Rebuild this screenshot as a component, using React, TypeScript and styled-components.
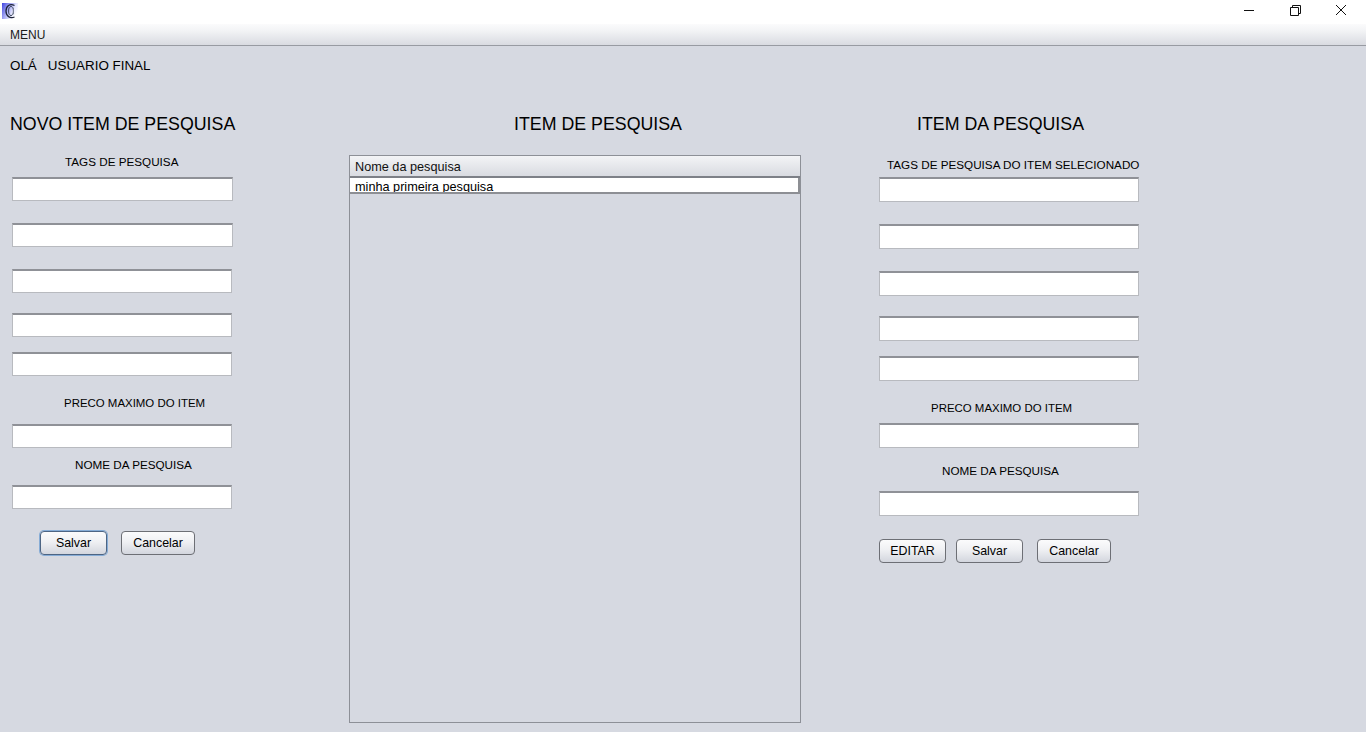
import styled, { createGlobalStyle } from "styled-components";

const GlobalStyle = createGlobalStyle`
  html, body {
    margin: 0;
    height: 100%;
    background: #d6d9e1;
    overflow: hidden;
  }
  * {
    box-sizing: border-box;
  }
`;

const Window = styled.div`
  width: 1366px;
  height: 732px;
  display: flex;
  flex-direction: column;
  font-family: "Liberation Sans", Arial, sans-serif;
  color: #000;
  background: #d6d9e1;
`;

const TitleBar = styled.div`
  height: 24px;
  flex: none;
  background: #fff;
  display: flex;
  align-items: flex-start;
  justify-content: space-between;
  padding: 3px 0 0 2px;
`;

const WindowButtons = styled.div`
  display: flex;
  gap: 23px;
  padding-right: 13px;
`;

const MenuBar = styled.div`
  height: 22px;
  flex: none;
  padding: 4px 0 0 10px;
  font-size: 12px;
  line-height: 15px;
  color: #1a1a1a;
  background: linear-gradient(#fbfbfc 0%, #f3f4f6 30%, #d9dbe1 100%);
  border-bottom: 1px solid #989ba2;
`;

const Greeting = styled.div`
  display: flex;
  gap: 11px;
  padding: 11px 0 0 10px;
  height: 68px;
  flex: none;
  font-size: 13.4px;
  line-height: 17px;
`;

const Columns = styled.div`
  display: grid;
  grid-template-columns: 339px 530px 1fr;
  padding-left: 10px;
  flex: 1;
  min-height: 0;
`;

const Column = styled.section`
  display: flex;
  flex-direction: column;
  min-height: 0;
`;

const Heading = styled.h2<{ $indent: number }>`
  margin: 0;
  padding-left: ${(p) => p.$indent}px;
  height: 21px;
  font-size: 17.8px;
  line-height: 21px;
  font-weight: 400;
  white-space: nowrap;
`;

const Label = styled.div<{ $top: number; $indent: number; $size?: number }>`
  margin-top: ${(p) => p.$top}px;
  padding-left: ${(p) => p.$indent}px;
  height: 14px;
  font-size: ${(p) => p.$size ?? 11.7}px;
  line-height: 14px;
  white-space: nowrap;
`;

const Field = styled.input<{ $top: number; $width: number; $height: number; $left?: number }>`
  display: block;
  margin-top: ${(p) => p.$top}px;
  margin-left: ${(p) => p.$left ?? 0}px;
  width: ${(p) => p.$width}px;
  height: ${(p) => p.$height}px;
  padding: 0 4px;
  background: #fff;
  border: 1px solid #b8babf;
  border-top: 2px solid #8f9197;
  outline: none;
  border-radius: 0;
`;

const ButtonRow = styled.div<{ $top: number; $indent: number }>`
  display: flex;
  margin-top: ${(p) => p.$top}px;
  padding-left: ${(p) => p.$indent}px;
`;

const PushButton = styled.button<{ $width: number; $left: number; $focused?: boolean }>`
  width: ${(p) => p.$width}px;
  height: 24px;
  margin-left: ${(p) => p.$left}px;
  padding: 1px 0 0;
  font-family: inherit;
  font-size: 12.4px;
  line-height: 15px;
  color: #000;
  border-radius: 4px;
  border: 1px solid ${(p) => (p.$focused ? "#4d6584" : "#6d6f75")};
  background: linear-gradient(#fbfbfc 0%, #eff0f3 45%, #d3d6de 100%);
  box-shadow: ${(p) => (p.$focused ? "0 0 0 1px #86acd6" : "none")};
`;

const TableBox = styled.div`
  width: 452px;
  flex: none;
  height: 568px;
  margin-top: 20px;
  border: 1px solid #8d9097;
`;

const TableHeader = styled.div`
  height: 22px;
  padding: 4px 0 0 5px;
  font-size: 12.7px;
  line-height: 14px;
  color: #111;
  background: linear-gradient(#f3f4f6, #d9dbe1);
  border-bottom: 2px solid #7d8087;
`;

const TableRow = styled.div`
  height: 16px;
  padding-left: 5px;
  font-size: 12.7px;
  line-height: 18px;
  background: #fff;
  overflow: hidden;
  border-right: 2px solid #8d8f94;
  border-bottom: 2px solid #8d8f94;
`;

const AppIcon = () => (
  <svg width="16" height="16" viewBox="0 0 16 16">
    <defs>
      <linearGradient id="iconBg" x1="0" y1="0" x2="1" y2="0.5">
        <stop offset="0" stopColor="#3f44e0" />
        <stop offset="0.75" stopColor="#e6e8ff" />
        <stop offset="1" stopColor="#ffffff" />
      </linearGradient>
    </defs>
    <rect width="16" height="16" fill="url(#iconBg)" />
    <path d="M12.5 2.5C8 0 4 3 4 8C4 13 8 16 12.5 14" fill="none" stroke="#1c2238" strokeWidth="1.3" />
    <ellipse cx="9" cy="8" rx="2.4" ry="4.5" fill="none" stroke="#3a4460" strokeWidth="1" />
    <path d="M11.5 5V11" stroke="#7a8296" strokeWidth="1" />
  </svg>
);

const MinimizeIcon = () => (
  <svg width="23" height="16" viewBox="0 0 23 16">
    <path d="M6 7.5H16" stroke="#111" strokeWidth="1" fill="none" />
  </svg>
);

const RestoreIcon = () => (
  <svg width="23" height="16" viewBox="0 0 23 16">
    <path d="M6.5 4.5H14.5V12.5H6.5ZM8.5 4.5V2.5H16.5V10.5H14.5" stroke="#111" strokeWidth="1" fill="none" />
  </svg>
);

const CloseIcon = () => (
  <svg width="23" height="16" viewBox="0 0 23 16">
    <path d="M6 2L16 12M16 2L6 12" stroke="#111" strokeWidth="1" fill="none" />
  </svg>
);

const fieldGaps = [22, 22, 20, 15];

export default function App() {
  return (
    <Window>
      <GlobalStyle />
      <TitleBar>
        <AppIcon />
        <WindowButtons>
          <MinimizeIcon />
          <RestoreIcon />
          <CloseIcon />
        </WindowButtons>
      </TitleBar>
      <MenuBar>MENU</MenuBar>
      <Greeting>
        <span>OLÁ</span>
        <span>USUARIO FINAL</span>
      </Greeting>
      <Columns>
        <Column>
          <Heading $indent={0}>NOVO ITEM DE PESQUISA</Heading>
          <Label $top={20} $indent={55}>TAGS DE PESQUISA</Label>
          <Field $top={8} $width={221} $height={24} $left={2} />
          {fieldGaps.map((top, i) => (
            <Field key={i} $top={top} $width={i === 0 ? 221 : 220} $height={24} $left={2} />
          ))}
          <Label $top={20} $indent={54} $size={11.45}>PRECO MAXIMO DO ITEM</Label>
          <Field $top={14} $width={220} $height={24} $left={2} />
          <Label $top={10} $indent={65}>NOME DA PESQUISA</Label>
          <Field $top={13} $width={220} $height={24} $left={2} />
          <ButtonRow $top={22} $indent={30}>
            <PushButton $width={67} $left={0} $focused>Salvar</PushButton>
            <PushButton $width={74} $left={14}>Cancelar</PushButton>
          </ButtonRow>
        </Column>
        <Column>
          <Heading $indent={165}>ITEM DE PESQUISA</Heading>
          <TableBox>
            <TableHeader>Nome da pesquisa</TableHeader>
            <TableRow>minha primeira pesquisa</TableRow>
          </TableBox>
        </Column>
        <Column>
          <Heading $indent={38}>ITEM DA PESQUISA</Heading>
          <Label $top={23} $indent={8}>TAGS DE PESQUISA DO ITEM SELECIONADO</Label>
          <Field $top={5} $width={260} $height={25} />
          {fieldGaps.map((top, i) => (
            <Field key={i} $top={top} $width={260} $height={25} />
          ))}
          <Label $top={20} $indent={52} $size={11.45}>PRECO MAXIMO DO ITEM</Label>
          <Field $top={8} $width={260} $height={25} />
          <Label $top={16} $indent={63}>NOME DA PESQUISA</Label>
          <Field $top={13} $width={260} $height={25} />
          <ButtonRow $top={23} $indent={0}>
            <PushButton $width={67} $left={0}>EDITAR</PushButton>
            <PushButton $width={67} $left={10}>Salvar</PushButton>
            <PushButton $width={74} $left={14}>Cancelar</PushButton>
          </ButtonRow>
        </Column>
      </Columns>
    </Window>
  );
}
